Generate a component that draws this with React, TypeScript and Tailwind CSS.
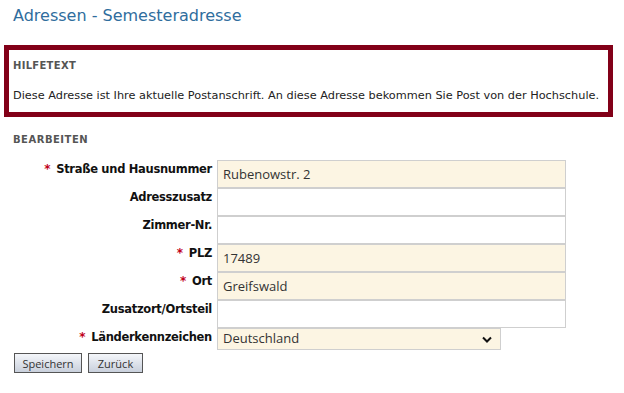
import React from 'react';

const fields = [
  { label: 'Straße und Hausnummer', value: 'Rubenowstr. 2', required: true },
  { label: 'Adresszusatz', value: '', required: false },
  { label: 'Zimmer-Nr.', value: '', required: false },
  { label: 'PLZ', value: '17489', required: true },
  { label: 'Ort', value: 'Greifswald', required: true },
  { label: 'Zusatzort/Ortsteil', value: '', required: false },
];

function Label({ text, required }: { text: string; required: boolean }) {
  return (
    <div className="w-[212px] shrink-0 pt-[1px] text-right text-[11.5px] font-bold leading-[16px] tracking-[-0.3px] text-[#111]">
      {required && <span className="mr-[6px] text-[12px] text-[#c0001a]">*</span>}
      {text}
    </div>
  );
}

export default function App() {
  return (
    <div className="min-h-[393px] w-[624px] bg-white font-['DejaVu_Sans',Verdana,sans-serif] text-[#222]">
      <h1 className="px-[13px] pt-[5px] text-[16px] leading-[22px] text-[#2f6d9d]">
        Adressen - Semesteradresse
      </h1>

      {/* Hilfetext */}
      <div className="ml-[4px] mt-[18px] h-[72px] w-[609px] border-[5px] border-[#820018] px-[4px]">
        <div className="pt-[10px] text-[10px] font-bold leading-[12px] tracking-[0.3px] text-[#555]">
          HILFETEXT
        </div>
        <p className="mt-[17px] text-[11.3px] leading-[14px] text-[#222]">
          Diese Adresse ist Ihre aktuelle Postanschrift. An diese Adresse bekommen Sie Post von der Hochschule.
        </p>
      </div>

      <div className="px-[13px] pt-[17px] text-[10px] font-bold leading-[12px] tracking-[0.5px] text-[#555]">
        BEARBEITEN
      </div>

      <div className="mt-[14px] flex flex-col">
        {fields.map((f) => (
          <div key={f.label} className="flex h-[28px] items-start">
            <Label text={f.label} required={f.required} />
            <input
              readOnly
              value={f.value}
              className={
                'ml-[5px] h-[28px] w-[349px] border border-[#cfcfcf] px-[5px] font-["Open_Sans",sans-serif] text-[13px] text-[#333] outline-none ' +
                (f.required ? 'bg-[#fcf5e3]' : 'bg-white')
              }
            />
          </div>
        ))}
        <div className="flex h-[24px] items-start">
          <Label text="Länderkennzeichen" required />
          <div className="ml-[5px] flex h-[22px] w-[284px] items-center justify-between border border-[#cfcfcf] bg-[#fcf5e3] pl-[5px] pr-[8px] font-['Open_Sans',sans-serif] text-[13px] text-[#333]">
            <span>Deutschland</span>
            <svg width="10" height="7" viewBox="0 0 10 7" fill="none">
              <path d="M1 1.5l4 4 4-4" stroke="#111" strokeWidth="2" />
            </svg>
          </div>
        </div>
      </div>

      <div className="ml-[14px] mt-[1px] flex gap-[6px]">
        <button className="h-[20px] w-[68px] border border-[#555] bg-gradient-to-b from-[#f4f6fa] to-[#c9d0dc] font-['Open_Sans',sans-serif] text-[11px] leading-none text-[#333]">
          Speichern
        </button>
        <button className="h-[20px] w-[55px] border border-[#555] bg-gradient-to-b from-[#f4f6fa] to-[#c9d0dc] font-['Open_Sans',sans-serif] text-[11px] leading-none text-[#333]">
          Zurück
        </button>
      </div>
    </div>
  );
}
